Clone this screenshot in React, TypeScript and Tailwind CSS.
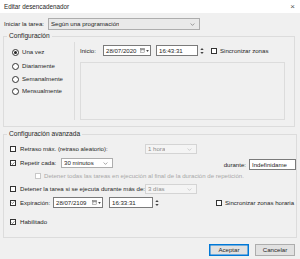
import React from "react";

const Check = ({ checked = false, disabled = false }: { checked?: boolean; disabled?: boolean }) => (
  <span
    className={`inline-flex h-[6px] w-[6px] shrink-0 items-center justify-center border bg-white ${
      disabled ? "border-[#c8c8c8] bg-[#f4f4f4]" : "border-[#333]"
    }`}
  >
    {checked && (
      <svg viewBox="0 0 6 6" className="h-[5px] w-[5px]">
        <path d="M0.8 3.1 L2.3 4.5 L5.2 1.2" fill="none" stroke="#222" strokeWidth="0.8" />
      </svg>
    )}
  </span>
);

const Radio = ({ checked = false }: { checked?: boolean }) => (
  <span className="inline-flex h-[7px] w-[7px] shrink-0 items-center justify-center rounded-full border border-[#333] bg-white">
    {checked && <span className="h-[3px] w-[3px] rounded-full bg-[#222]" />}
  </span>
);

const Chevron = ({ color = "#555" }: { color?: string }) => (
  <svg viewBox="0 0 6 4" className="h-[3px] w-[5px] shrink-0">
    <path d="M0.5 0.7 L3 3.2 L5.5 0.7" fill="none" stroke={color} strokeWidth="0.7" />
  </svg>
);

const Combo = ({
  text,
  className,
  disabled = false,
  white = false,
}: {
  text: string;
  className: string;
  disabled?: boolean;
  white?: boolean;
}) => (
  <div
    className={`flex items-center justify-between overflow-hidden border pl-[2px] pr-[2px] ${className} ${
      disabled
        ? "border-[#d4d4d4] bg-[#f4f4f4] text-[#8c8c8c]"
        : white
        ? "border-[#7a7a7a] bg-white"
        : "border-[#adadad] bg-[#e9e9e9]"
    }`}
  >
    <span className="overflow-hidden whitespace-nowrap">{text}</span>
    {!white && <Chevron color={disabled ? "#b0b0b0" : "#555"} />}
  </div>
);

const DateBox = ({ text, className }: { text: string; className: string }) => (
  <div className={`flex items-center justify-between border border-[#7a7a7a] bg-white pl-[2px] pr-[1px] ${className}`}>
    <span className="whitespace-nowrap">{text}</span>
    <span className="flex items-center gap-[1px]">
      <svg viewBox="0 0 6 6" className="h-[5px] w-[5px]">
        <rect x="0.4" y="0.8" width="5.2" height="4.8" fill="none" stroke="#777" strokeWidth="0.6" />
        <rect x="0.4" y="0.8" width="5.2" height="1.3" fill="#777" />
        <rect x="1.3" y="2.8" width="1" height="1" fill="#999" />
        <rect x="3.3" y="2.8" width="1" height="1" fill="#999" />
      </svg>
      <svg viewBox="0 0 4 3" className="h-[2px] w-[3px]">
        <path d="M0 0 L4 0 L2 3 Z" fill="#444" />
      </svg>
    </span>
  </div>
);

const TimeBox = ({ text, className }: { text: string; className: string }) => (
  <div className="flex items-center gap-[2px]">
    <div className={`flex items-center border border-[#7a7a7a] bg-white pl-[2px] ${className}`}>
      <span className="whitespace-nowrap">{text}</span>
    </div>
    <svg viewBox="0 0 4 8" className="h-[8px] w-[4px]">
      <path d="M0.3 3 L2 1 L3.7 3 Z" fill="#444" />
      <path d="M0.3 5 L2 7 L3.7 5 Z" fill="#444" />
    </svg>
  </div>
);

export default function App() {
  return (
    <div
      className="flex h-[259px] w-[300px] flex-col overflow-hidden whitespace-nowrap bg-[#f0f0f0] text-[6.1px] leading-[8px] text-[#262626]"
      style={{ fontFamily: '"Liberation Sans", Arial, sans-serif' }}
    >
      {/* title bar */}
      <div className="flex h-[13px] items-center justify-between bg-white pl-[4px] pr-[5px] text-[6.3px]">
        <span>Editar desencadenador</span>
        <span className="text-[8px] text-[#555]">×</span>
      </div>

      <div className="flex flex-col pl-[3px] pr-[5px]">
        {/* start task */}
        <div className="mt-[5px] flex h-[12px] items-center">
          <span className="w-[45px] pl-[1px]">Iniciar la tarea:</span>
          <Combo text="Según una programación" className="h-[12px] w-[152px] pr-[4px]" />
        </div>

        {/* configuración */}
        <fieldset className="mt-[2px] h-[95px] border border-[#dcdcdc] px-0">
          <legend className="ml-[3px] px-[2px] text-[6.6px] leading-[8px]">Configuración</legend>
          <div className="flex h-full">
            <div className="mt-[2px] flex h-[78px] w-[71px] flex-col border-r border-[#dcdcdc] pl-[8px]">
              <label className="mt-[6px] flex h-[8px] items-center gap-[3px]">
                <Radio checked />
                Una vez
              </label>
              <label className="mt-[6px] flex h-[8px] items-center gap-[3px]">
                <Radio />
                Diariamente
              </label>
              <label className="mt-[5px] flex h-[8px] items-center gap-[3px]">
                <Radio />
                Semanalmente
              </label>
              <label className="mt-[4px] flex h-[8px] items-center gap-[3px]">
                <Radio />
                Mensualmente
              </label>
            </div>
            <div className="flex flex-1 flex-col pl-[5px] pr-[9px]">
              <div className="mt-[5px] flex h-[11px] items-center">
                <span className="w-[23px]">Inicio:</span>
                <DateBox text="28/07/2020" className="h-[11px] w-[48px]" />
                <span className="w-[5px]" />
                <TimeBox text="16:43:31" className="h-[11px] w-[42px]" />
                <span className="w-[7px]" />
                <label className="flex items-center gap-[3px]">
                  <Check />
                  Sincronizar zonas
                </label>
              </div>
              <div className="mt-[6px] h-[58px] border border-[#dcdcdc]" />
            </div>
          </div>
        </fieldset>

        {/* configuración avanzada */}
        <fieldset className="mt-[3px] h-[108px] border border-[#dcdcdc] px-0">
          <legend className="ml-[3px] px-[2px] text-[6.6px] leading-[8px]">Configuración avanzada</legend>
          <div className="flex flex-col pl-[6px]">
            <div className="mt-[6px] flex h-[10px] items-center">
              <label className="flex w-[135px] items-center gap-[4px]">
                <Check />
                Retraso máx. (retraso aleatorio):
              </label>
              <Combo text="1 hora" disabled className="h-[10px] w-[52px] pr-[4px]" />
            </div>
            <div className="mt-[4px] flex h-[12px]">
              <label className="flex h-[10px] w-[51px] items-center gap-[4px]">
                <Check checked />
                Repetir cada:
              </label>
              <Combo text="30 minutos" className="h-[10px] w-[52px] border-[#7a7a7a] bg-white pr-[4px]" />
              <span className="flex h-[12px] w-[136px] items-end justify-end pb-[1px] pr-[3px]">durante:</span>
              <Combo text="Indefinidame" white className="h-[11px] w-[47px] self-end" />
            </div>
            <div className="mt-[2px] flex h-[8px] items-center pl-[25px] text-[#a8a8a8]">
              <label className="flex items-center gap-[3px]">
                <Check disabled />
                Detener todas las tareas en ejecución al final de la duración de repetición.
              </label>
            </div>
            <div className="mt-[4px] flex h-[10px] items-center">
              <label className="flex w-[135px] items-center gap-[4px]">
                <Check />
                Detener la tarea si se ejecuta durante más de:
              </label>
              <Combo text="3 días" disabled className="h-[10px] w-[52px] pr-[4px]" />
            </div>
            <div className="mt-[3px] flex h-[11px] items-center">
              <label className="flex w-[43px] items-center gap-[4px]">
                <Check checked />
                Expiración:
              </label>
              <DateBox text="28/07/2109" className="h-[11px] w-[50px]" />
              <span className="w-[6px]" />
              <TimeBox text="16:33:31" className="h-[11px] w-[44px]" />
              <span className="w-[57px]" />
              <label className="flex items-center gap-[3px]">
                <Check />
                Sincronizar zonas horaria
              </label>
            </div>
            <div className="mt-[10px] flex h-[8px] items-center">
              <label className="flex items-center gap-[4px]">
                <Check checked />
                Habilitado
              </label>
            </div>
          </div>
        </fieldset>

        {/* buttons */}
        <div className="mt-[6px] flex justify-end gap-[6px]">
          <button className="h-[12px] w-[40px] border border-[#0078d7] bg-[#e1e1e1] text-[6.1px] leading-[8px] shadow-[inset_0_0_0_0.5px_#0078d7]">
            Aceptar
          </button>
          <button className="h-[12px] w-[40px] border border-[#adadad] bg-[#e1e1e1] text-[6.1px] leading-[8px]">
            Cancelar
          </button>
        </div>
      </div>
    </div>
  );
}
